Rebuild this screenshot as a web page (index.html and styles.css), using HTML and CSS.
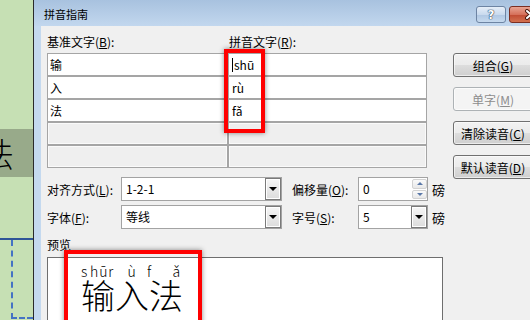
FILE: index.html
```html
<!DOCTYPE html>
<html lang="zh-CN">

<head>
    <meta charset="UTF-8">
    <meta name="viewport" content="width=device-width, initial-scale=1.0">
    <title>拼音指南</title>
    <link rel="stylesheet" href="styles.css">
</head>

<body>
    <div class="screen">
        <!-- worksheet behind the dialog -->
        <div class="sheet">
            <div class="sheet-band"><span class="band-char">法</span></div>
            <div class="sheet-table">
                <div class="sheet-cell"></div>
            </div>
        </div>

        <div class="dialog">
            <div class="titlebar">
                <span class="title">拼音指南</span>
                <div class="caption-btns">
                    <span class="cap-btn help">?</span>
                    <span class="cap-btn close">
                        <svg width="14" height="11" viewBox="0 0 14 11">
                            <path d="M3 2 L11 9 M11 2 L3 9" stroke="#4a1a10" stroke-width="4" stroke-linecap="round" />
                            <path d="M3 2 L11 9 M11 2 L3 9" stroke="#fff" stroke-width="2" stroke-linecap="round" />
                        </svg>
                    </span>
                </div>
            </div>
            <div class="frame">
                <div class="content">
                    <div class="main">
                        <div class="col-labels">
                            <span class="col-label first">基准文字(<u>B</u>):</span>
                            <span class="col-label">拼音文字(<u>R</u>):</span>
                        </div>
                        <div class="grid">
                            <div class="cell">输</div>
                            <div class="cell pinyin"><span class="caret"></span>shū</div>
                            <div class="cell">入</div>
                            <div class="cell pinyin">rù</div>
                            <div class="cell">法</div>
                            <div class="cell pinyin">fǎ</div>
                            <div class="cell empty"></div>
                            <div class="cell empty"></div>
                            <div class="cell empty"></div>
                            <div class="cell empty"></div>
                        </div>

                        <div class="options">
                            <span class="opt-label">对齐方式(<u>L</u>):</span>
                            <div class="combo">
                                <span class="combo-text">1-2-1</span>
                                <span class="combo-arrow"><i class="tri-down"></i></span>
                            </div>
                            <span class="opt-label second">偏移量(<u>O</u>):</span>
                            <div class="combo">
                                <span class="combo-text">0</span>
                                <span class="spin">
                                    <span class="spin-btn"><i class="tri-up"></i></span>
                                    <span class="spin-btn"><i class="tri-small-down"></i></span>
                                </span>
                            </div>
                            <span class="unit">磅</span>

                            <span class="opt-label">字体(<u>F</u>):</span>
                            <div class="combo">
                                <span class="combo-text">等线</span>
                                <span class="combo-arrow"><i class="tri-down"></i></span>
                            </div>
                            <span class="opt-label second">字号(<u>S</u>):</span>
                            <div class="combo">
                                <span class="combo-text">5</span>
                                <span class="combo-arrow"><i class="tri-down"></i></span>
                            </div>
                            <span class="unit">磅</span>
                        </div>

                        <div class="preview-label">预览</div>
                        <div class="preview">
                            <div class="ruby">
                                <span class="r1">s</span><span class="r2">h</span><span class="r3">ū</span><span class="r4">r</span><span class="r5">ù</span><span class="r6">f</span><span>ǎ</span>
                            </div>
                            <div class="base">输入法</div>
                        </div>

                        <!-- red highlight marks -->
                        <div class="mark mark-pinyin"></div>
                        <div class="mark mark-preview"></div>
                    </div>

                    <div class="side">
                        <button class="btn">组合(<u>G</u>)</button>
                        <button class="btn" disabled>单字(<u>M</u>)</button>
                        <button class="btn">清除读音(<u>C</u>)</button>
                        <button class="btn">默认读音(<u>D</u>)</button>
                    </div>
                </div>
            </div>
        </div>
    </div>
</body>

</html>
```

FILE: styles.css
```css
body {
    margin: 0;
    font-family: "Noto Sans CJK SC", "Noto Sans", sans-serif;
    font-size: 12px;
    color: #000;
}

.screen {
    display: flex;
    width: 530px;
    height: 320px;
    overflow: hidden;
}

/* sheet on the left */
.sheet {
    flex-shrink: 0;
    width: 33px;
    display: flex;
    flex-direction: column;
    background-color: #c6e0b4;
    border-right: 1px solid #2a2a2a;
}

.sheet-band {
    display: flex;
    align-items: center;
    height: 48px;
    margin-top: 129px;
    background-color: #98aa8a;
    overflow: hidden;
}

.band-char {
    margin-left: -19px;
    font-size: 33px;
    line-height: 33px;
    font-weight: 300;
}

.sheet-table {
    margin-top: 61px;
    border-top: 2px solid #2f5597;
}

.sheet-cell {
    height: 77px;
    margin-left: 11px;
    border-left: 2px dashed #4472c4;
    border-bottom: 2px dashed #4472c4;
}

/* dialog */
.dialog {
    flex-shrink: 0;
    width: 520px;
    display: flex;
    flex-direction: column;
    background-color: #c4d9ef;
}

.titlebar {
    display: flex;
    height: 26px;
    background: linear-gradient(#a8c2df, #c2d7ee);
}

.title {
    flex: 1;
    padding-left: 10px;
    line-height: 28px;
    font-size: 11px;
}

.caption-btns {
    display: flex;
    gap: 3px;
    margin-top: 6px;
    margin-right: 2px;
}

.cap-btn {
    display: flex;
    align-items: center;
    justify-content: center;
    height: 15px;
    border-radius: 3px;
}

.help {
    width: 28px;
    border: 1px solid #6d84a3;
    background: linear-gradient(#e6eef8, #c9daee 50%, #afc7e3 51%, #c6d9ee);
    color: #fff;
    font-family: "DejaVu Sans", sans-serif;
    font-weight: bold;
    font-size: 12px;
    text-shadow: 0 0 1px #2a3d57, 0 0 1px #2a3d57, 0 0 1px #2a3d57;
}

.close {
    width: 41px;
    border: 1px solid #7b2e22;
    background: linear-gradient(#e8a493, #d6715b 50%, #c04a32 51%, #d2704f);
}

.frame {
    flex: 1;
    display: flex;
    padding-left: 7px;
}

.content {
    flex: 1;
    display: grid;
    grid-template-columns: 396px 80px;
    column-gap: 10px;
    align-items: start;
    padding: 8px 0 0 6px;
    background-color: #f0f0f0;
}

.main {
    position: relative;
    display: flex;
    flex-direction: column;
}

.col-labels {
    display: flex;
    height: 16px;
    line-height: 16px;
}

.col-label.first {
    width: 182px;
}

/* ruby table */
.grid {
    display: grid;
    grid-template-columns: 179px 197px;
    grid-auto-rows: 21px;
    gap: 2px;
    width: 378px;
    margin-top: 3px;
    padding: 1px;
    background-color: #a5a5a5;
}

.cell {
    display: flex;
    align-items: center;
    padding-left: 2px;
    background-color: #fff;
}

.cell.pinyin {
    padding-left: 3px;
}

.cell.empty {
    background-color: #efefef;
    box-shadow: inset 0 0 0 1px #fafafa;
}

.caret {
    width: 1px;
    height: 14px;
    margin-right: 1px;
    background-color: #000;
}

/* alignment / font rows */
.options {
    display: grid;
    grid-template-columns: 74px 161px 76px 70px auto;
    grid-auto-rows: 24px;
    row-gap: 4px;
    align-items: center;
    margin-top: 9px;
}

.opt-label.second {
    padding-left: 10px;
}

.unit {
    padding-left: 4px;
    font-size: 13px;
}

.combo {
    display: flex;
    height: 24px;
    box-sizing: border-box;
    border: 1px solid #a3a3a3;
    background-color: #fff;
}

.combo-text {
    flex: 1;
    padding-left: 4px;
    line-height: 22px;
}

.combo-arrow {
    display: flex;
    align-items: center;
    justify-content: center;
    width: 14px;
    border: 1px solid #7a7a7a;
    background: linear-gradient(#f6f6f6, #dcdcdc);
    box-shadow: inset 0 0 0 1px #fff;
}

.tri-down {
    border-left: 4px solid transparent;
    border-right: 4px solid transparent;
    border-top: 4px solid #000;
}

.spin {
    display: flex;
    flex-direction: column;
    gap: 1px;
    width: 15px;
    padding: 1px 0;
}

.spin-btn {
    flex: 1;
    display: flex;
    align-items: center;
    justify-content: center;
    border: 1px solid #d2d2d2;
    border-radius: 2px;
    background: linear-gradient(#fafafa, #e8e8e8);
}

.tri-up {
    border-left: 3px solid transparent;
    border-right: 3px solid transparent;
    border-bottom: 3px solid #5a78a8;
}

.tri-small-down {
    border-left: 3px solid transparent;
    border-right: 3px solid transparent;
    border-top: 3px solid #5a78a8;
}

/* preview */
.preview-label {
    margin-top: 8px;
    line-height: 16px;
}

.preview {
    height: 80px;
    margin-top: 4px;
    padding: 6px 0 0 33px;
    border: 1px solid #6e6e6e;
    background-color: #fff;
}

.ruby {
    display: flex;
    font-size: 14px;
    line-height: 14px;
    font-weight: 300;
}

.r1 { width: 9px; }
.r2 { width: 9.3px; }
.r3 { width: 9px; }
.r4 { width: 19.3px; }
.r5 { width: 19.4px; }
.r6 { width: 25.6px; }

.base {
    font-size: 34px;
    line-height: 34px;
    font-weight: 300;
}

.mark {
    position: absolute;
    border: 4px solid #ff0000;
    box-shadow: 0 0 5px rgba(0, 0, 0, 0.45);
}

.mark-pinyin {
    left: 177px;
    top: 15px;
    width: 33px;
    height: 76px;
}

.mark-preview {
    left: 17px;
    top: 216px;
    width: 130px;
    height: 100px;
}

/* buttons on the right */
.side {
    display: flex;
    flex-direction: column;
    gap: 10px;
    margin-top: 19px;
}

.btn {
    height: 24px;
    width: 80px;
    padding: 0;
    border: 1px solid #707070;
    border-radius: 3px;
    background: linear-gradient(#f2f2f2, #ebebeb 50%, #dddddd 51%, #cfcfcf);
    box-shadow: inset 0 0 0 1px rgba(255, 255, 255, 0.6);
    font-family: inherit;
    font-size: 12px;
    color: #000;
}

.btn:disabled {
    border-color: #adb2b5;
    background: #f4f4f4;
    color: #8d8d8d;
}
```
